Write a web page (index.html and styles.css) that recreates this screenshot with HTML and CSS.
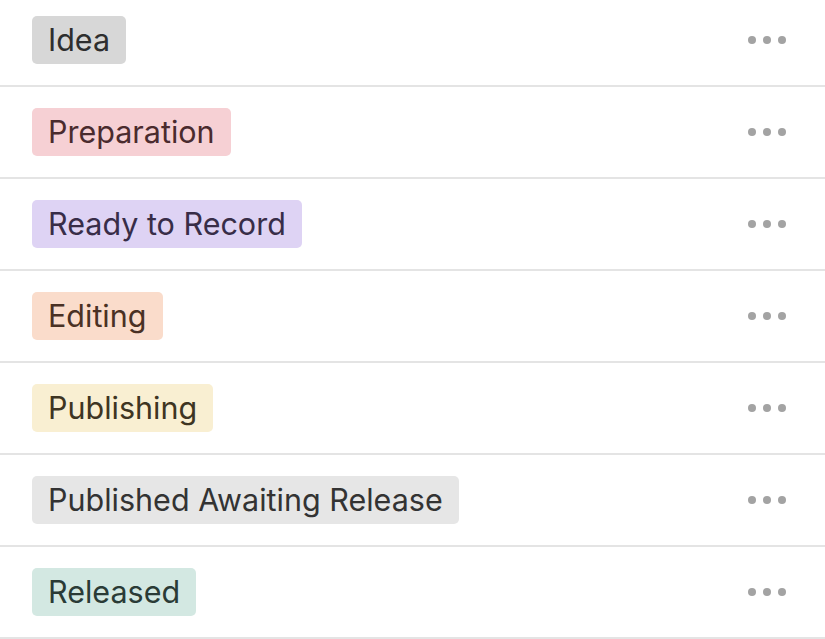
FILE: index.html
```html
<!DOCTYPE html>
<html lang="en">
<head>
    <meta charset="UTF-8">
    <meta name="viewport" content="width=device-width, initial-scale=1.0">
    <title>Status options</title>
    <link rel="stylesheet" href="styles.css">
</head>
<body>
    <ul class="options">
        <li class="option">
            <span class="tag gray">Idea</span>
            <span class="more"><i></i><i></i><i></i></span>
        </li>
        <li class="option">
            <span class="tag pink">Preparation</span>
            <span class="more"><i></i><i></i><i></i></span>
        </li>
        <li class="option">
            <span class="tag purple">Ready to Record</span>
            <span class="more"><i></i><i></i><i></i></span>
        </li>
        <li class="option">
            <span class="tag orange">Editing</span>
            <span class="more"><i></i><i></i><i></i></span>
        </li>
        <li class="option">
            <span class="tag yellow">Publishing</span>
            <span class="more"><i></i><i></i><i></i></span>
        </li>
        <li class="option">
            <span class="tag light">Published Awaiting Release</span>
            <span class="more"><i></i><i></i><i></i></span>
        </li>
        <li class="option">
            <span class="tag green">Released</span>
            <span class="more"><i></i><i></i><i></i></span>
        </li>
    </ul>
</body>
</html>
```

FILE: styles.css
```css
body{
    margin:0;
    background:#fff;
    font-family: Inter, "Liberation Sans", sans-serif;
    overflow:hidden;
}
.options{
    list-style:none;
    margin:-5px 0 0 0;
    padding:0;
}
.option{
    height:90px;
    border-bottom:2px solid #e4e4e4;
    display:flex;
    align-items:center;
    justify-content:space-between;
    padding:0 39px 0 32px;
}
.tag{
    height:48px;
    line-height:48px;
    padding:0 16px 0 16px;
    border-radius:5px;
    font-size:30.5px;
    color:#333;
}
.gray{ background:#d7d7d7; color:#2e2e2e; }
.pink{ background:#f6d0d4; color:#4a2b2e; }
.purple{ background:#ded3f4; color:#382d48; }
.orange{ background:#fadccb; color:#4a3124; }
.yellow{ background:#f9efd2; color:#3e3522; }
.light{ background:#e6e6e6; color:#333; }
.green{ background:#d3e8e2; color:#2a3b36; }

.more{
    display:flex;
    gap:7px;
}
.more i{
    width:8px;
    height:8px;
    border-radius:50%;
    background:#a3a3a3;
}
```
